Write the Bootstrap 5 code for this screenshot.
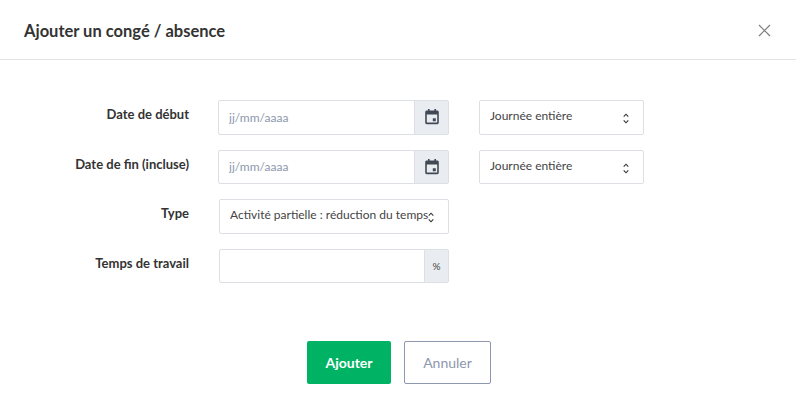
<!DOCTYPE html>
<html lang="fr">
<head>
<meta charset="utf-8">
<title>Ajouter un congé / absence</title>
<link href="https://cdn.jsdelivr.net/npm/bootstrap@5.3.0/dist/css/bootstrap.min.css" rel="stylesheet">
<style>
html, body { background: #fff; margin: 0; }
body { font-family: Lato, "Liberation Sans", sans-serif; color: #333; overflow: hidden; }
.dlg-head { height: 60px; padding: 2px 24px 0; border-bottom: 1px solid #e3e3e3; }
.dlg-title { font-size: 16.5px; font-weight: 700; color: #333; margin: 0; line-height: 24px; }
.dlg-close { background: none; border: 0; padding: 0; width: 16px; height: 16px; line-height: 0; }
.dlg-body { padding: 40px 0 0 0; }
.frm-row { height: 34.6px; margin-bottom: 15px; }
.frm-label { width: 189px; text-align: right; font-size: 13px; font-weight: 700; color: #333; line-height: 16px; padding-top: 6px; margin: 0; flex: none; }
.frm-field { width: 231px; margin-left: 29px; flex: none; }
.frm-field-b { width: 230px; margin-left: 30px; flex: none; }
.frm-side { width: 165px; margin-left: 30px; flex: none; }
.input-group .form-control, .form-select { height: 34.6px; font-size: 12px; line-height: 16px; border: 1px solid #dcdfe3; color: #444; border-radius: 2px; box-shadow: none; }
.input-group .form-control { padding: 0 10px; }
.input-group .form-control::placeholder { color: #8d97ad; opacity: 1; }
.form-select { padding: 0 18px 2px 10px; background-image: none; }
.sel-wrap { position: relative; }
.sel-caret { position: absolute; right: 15px; top: 13px; width: 6px; height: 11px; pointer-events: none; }
.cal-add { width: 35px; padding: 0; justify-content: center; background: #e9ecf1; border: 1px solid #dcdfe3; border-radius: 0 2px 2px 0; }
.pct-add { width: 25px; padding: 0; justify-content: center; background: #e9ecf1; border: 1px solid #dcdfe3; border-radius: 0 2px 2px 0; font-size: 10px; color: #444; }
.dlg-foot { padding: 42.6px 0 0 2px; gap: 13px; }
.btn-add { width: 84px; height: 43px; background: #00b364; border: 0; color: #fff; font-size: 14px; font-weight: 700; border-radius: 2px; padding: 0; }
.btn-add:hover { background: #00b364; color: #fff; }
.btn-cancel { width: 87px; height: 43px; background: #fff; border: 1px solid #8d97ad; color: #8d97ad; font-size: 14px; font-weight: 400; border-radius: 2px; padding: 0; }
</style>
</head>
<body>
<div class="dlg-head d-flex align-items-center justify-content-between">
  <h5 class="dlg-title">Ajouter un congé / absence</h5>
  <button class="dlg-close" type="button" aria-label="Fermer">
    <svg width="13" height="13" viewBox="0 0 13 13"><path d="M1 1l11 11M12 1L1 12" stroke="#7c7c7c" stroke-width="1.2" fill="none"/></svg>
  </button>
</div>
<form class="dlg-body">
  <div class="frm-row d-flex">
    <label class="frm-label">Date de début</label>
    <div class="frm-field input-group flex-nowrap">
      <input class="form-control" type="text" placeholder="jj/mm/aaaa">
      <span class="input-group-text cal-add">
        <svg width="14" height="16" viewBox="0 0 14 16"><path fill="#414a54" d="M3 0h1.6v1.6h4.8V0H11v1.6h1.2c.9 0 1.6.7 1.6 1.6v10.4c0 .9-.7 1.6-1.6 1.6H1.8c-.9 0-1.6-.7-1.6-1.6V3.2c0-.9.7-1.6 1.6-1.6H3zM1.8 5.6v8h10.4v-8zm6 3.6h3v3h-3z" fill-rule="evenodd"/></svg>
      </span>
    </div>
    <div class="frm-side sel-wrap">
      <select class="form-select"><option>Journée entière</option></select>
      <svg class="sel-caret" viewBox="0 0 6 11"><path d="M.7 3.6L3 1.2l2.3 2.4M.7 7.4L3 9.8l2.3-2.4" stroke="#333" stroke-width="1.1" fill="none"/></svg>
    </div>
  </div>
  <div class="frm-row d-flex">
    <label class="frm-label">Date de fin (incluse)</label>
    <div class="frm-field input-group flex-nowrap">
      <input class="form-control" type="text" placeholder="jj/mm/aaaa">
      <span class="input-group-text cal-add">
        <svg width="14" height="16" viewBox="0 0 14 16"><path fill="#414a54" d="M3 0h1.6v1.6h4.8V0H11v1.6h1.2c.9 0 1.6.7 1.6 1.6v10.4c0 .9-.7 1.6-1.6 1.6H1.8c-.9 0-1.6-.7-1.6-1.6V3.2c0-.9.7-1.6 1.6-1.6H3zM1.8 5.6v8h10.4v-8zm6 3.6h3v3h-3z" fill-rule="evenodd"/></svg>
      </span>
    </div>
    <div class="frm-side sel-wrap">
      <select class="form-select"><option>Journée entière</option></select>
      <svg class="sel-caret" viewBox="0 0 6 11"><path d="M.7 3.6L3 1.2l2.3 2.4M.7 7.4L3 9.8l2.3-2.4" stroke="#333" stroke-width="1.1" fill="none"/></svg>
    </div>
  </div>
  <div class="frm-row d-flex">
    <label class="frm-label">Type</label>
    <div class="frm-field-b sel-wrap">
      <select class="form-select"><option>Activité partielle : réduction du temps</option></select>
      <svg class="sel-caret" viewBox="0 0 6 11"><path d="M.7 3.6L3 1.2l2.3 2.4M.7 7.4L3 9.8l2.3-2.4" stroke="#333" stroke-width="1.1" fill="none"/></svg>
    </div>
  </div>
  <div class="frm-row d-flex">
    <label class="frm-label">Temps de travail</label>
    <div class="frm-field-b input-group flex-nowrap">
      <input class="form-control" type="text">
      <span class="input-group-text pct-add">%</span>
    </div>
  </div>
  <div class="dlg-foot d-flex justify-content-center">
    <button type="button" class="btn btn-add">Ajouter</button>
    <button type="button" class="btn btn-cancel">Annuler</button>
  </div>
</form>
<script src="https://cdn.jsdelivr.net/npm/bootstrap@5.3.0/dist/js/bootstrap.bundle.min.js"></script>
</body>
</html>
